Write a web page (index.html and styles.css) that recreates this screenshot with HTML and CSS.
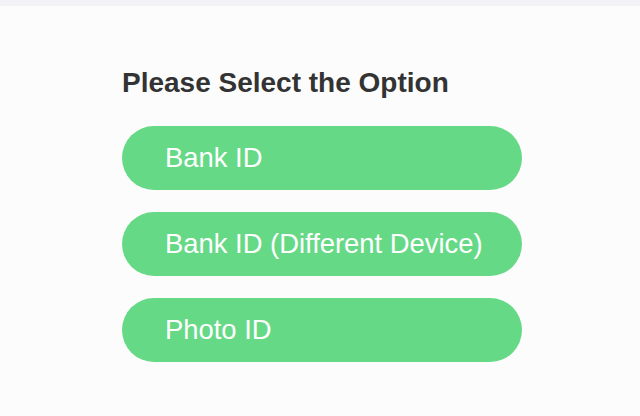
FILE: index.html
```html
<!DOCTYPE html>
<html>
<head>
<meta charset="utf-8">
<link rel="stylesheet" href="styles.css">
</head>
<body>
<div class="topbar"></div>
<main class="page">
  <h1 class="title">Please Select the Option</h1>
  <div class="options">
    <button class="option">Bank ID</button>
    <button class="option">Bank ID (Different Device)</button>
    <button class="option">Photo ID</button>
  </div>
</main>
</body>
</html>
```
FILE: styles.css
```css
html, body {
  margin: 0;
  padding: 0;
  background: #fcfcfd;
  font-family: "Liberation Sans", Arial, sans-serif;
}
.topbar {
  height: 6px;
  background: #f3f3f7;
}
.page {
  padding: 61px 0 0 122px;
}
.title {
  margin: 0 0 27px 0;
  font-size: 28px;
  line-height: 32px;
  font-weight: bold;
  color: #333333;
}
.options {
  display: flex;
  flex-direction: column;
  gap: 22px;
}
.option {
  width: 400px;
  height: 64px;
  border: none;
  border-radius: 32px;
  background: #66d987;
  color: #ffffff;
  font-family: "Liberation Sans", Arial, sans-serif;
  font-size: 27.4px;
  text-align: left;
  padding: 0 0 0 43px;
  cursor: pointer;
}
```
